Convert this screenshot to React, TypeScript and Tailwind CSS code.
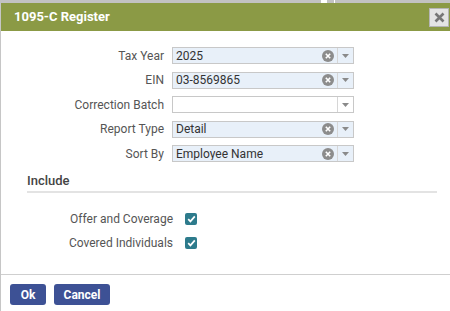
import React from "react";

const fields = [
  { label: "Tax Year", value: "2025", clear: true },
  { label: "EIN", value: "03-8569865", clear: true },
  { label: "Correction Batch", value: "", clear: false },
  { label: "Report Type", value: "Detail", clear: true },
  { label: "Sort By", value: "Employee Name", clear: true },
];

const includes = ["Offer and Coverage", "Covered Individuals"];

function ClearIcon() {
  return (
    <svg width="12" height="12" viewBox="0 0 12 12">
      <circle cx="6" cy="6" r="6" fill="#8c8c8c" />
      <path d="M3.8 3.8l4.4 4.4M8.2 3.8l-4.4 4.4" stroke="#fff" strokeWidth="1.6" />
    </svg>
  );
}

function Select({ value, clear }: { value: string; clear: boolean }) {
  return (
    <div
      className={`flex h-[17px] w-[182px] items-center border border-[#c8c8c8] ${
        value ? "bg-[#e8f0f9]" : "bg-white"
      }`}
    >
      <span className="flex-1 truncate pl-[3px] text-[12px] leading-none text-[#333]">{value}</span>
      {clear && (
        <span className="mr-[3px] flex">
          <ClearIcon />
        </span>
      )}
      <span className="flex h-full w-[16px] items-center justify-center border-l border-[#d6d6d6]">
        <svg width="7" height="4" viewBox="0 0 7 4">
          <path d="M0 0h7L3.5 4z" fill="#8a8a8a" />
        </svg>
      </span>
    </div>
  );
}

function Check() {
  return (
    <span className="flex h-[12px] w-[12px] items-center justify-center rounded-[2px] bg-[#2d7b8c]">
      <svg width="9" height="8" viewBox="0 0 9 8">
        <path d="M1.2 4.2l2.2 2.2L7.8 1.4" stroke="#fff" strokeWidth="1.7" fill="none" />
      </svg>
    </span>
  );
}

export default function App() {
  return (
    <div className="relative h-[311px] w-[450px] overflow-hidden bg-white font-['Roboto',sans-serif]">
      {/* page strip behind the dialog */}
      <div className="flex h-[3px] bg-[#c2c2c2]">
        <div className="ml-[321px] w-[6px] bg-white" />
        <div className="ml-[7px] w-px bg-white" />
      </div>

      <div className="flex h-[308px] flex-col border-l border-[#c6c6c6]">
        {/* Title bar */}
        <div className="flex h-[28px] items-center justify-between bg-[#8b9a45] pl-[13px] pr-px">
          <span className="text-[13px] font-bold text-white">1095-C Register</span>
          <button className="flex h-[19px] w-[20px] items-center justify-center border border-[#b5b5b5] bg-[#e4e4e4]">
            <svg width="11" height="11" viewBox="0 0 11 11">
              <path d="M1.5 1.5l8 8M9.5 1.5l-8 8" stroke="#777" strokeWidth="2.6" />
            </svg>
          </button>
        </div>

        {/* Body */}
        <div className="flex-1 pt-[16px]">
          <div className="flex flex-col gap-[7.5px]">
            {fields.map((f) => (
              <div key={f.label} className="flex h-[17px] items-center">
                <label className="w-[163px] text-right text-[12px] leading-none text-[#555]">{f.label}</label>
                <div className="ml-[8px]">
                  <Select value={f.value} clear={f.clear} />
                </div>
              </div>
            ))}
          </div>

          <div className="ml-[26px] mr-[13px] mt-[11px] border-b-2 border-[#e3e3e3] pb-[3px]">
            <span className="block text-[13px] font-medium leading-[15px] text-[#444]">Include</span>
          </div>

          <div className="mt-[20px] flex flex-col gap-[12px]">
            {includes.map((t) => (
              <div key={t} className="flex h-[12px] items-center">
                <label className="w-[172px] text-right text-[12px] leading-none text-[#555]">{t}</label>
                <span className="ml-[12px]">
                  <Check />
                </span>
              </div>
            ))}
          </div>
        </div>

        {/* Footer */}
        <div className="flex h-[37px] gap-[8px] border-t border-[#cfcfcf] pl-[9px] pt-[9px]">
          <button className="h-[21px] w-[36px] rounded-[3px] bg-[#3d5195] text-[12px] font-bold text-white">
            Ok
          </button>
          <button className="h-[21px] w-[56px] rounded-[3px] bg-[#3d5195] text-[12px] font-bold text-white">
            Cancel
          </button>
        </div>
      </div>
    </div>
  );
}
